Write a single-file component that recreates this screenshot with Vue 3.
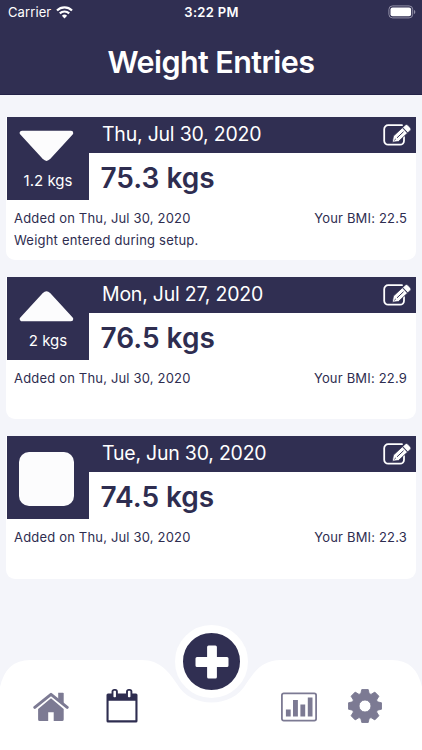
<script setup>
import { ref } from 'vue'

const entries = ref([
    {
        id: 1,
        date: 'Thu, Jul 30, 2020',
        weight: '75.3 kgs',
        trend: 'down',
        change: '1.2 kgs',
        added: 'Thu, Jul 30, 2020',
        bmi: '22.5',
        note: 'Weight entered during setup.'
    },
    {
        id: 2,
        date: 'Mon, Jul 27, 2020',
        weight: '76.5 kgs',
        trend: 'up',
        change: '2 kgs',
        added: 'Thu, Jul 30, 2020',
        bmi: '22.9',
        note: ''
    },
    {
        id: 3,
        date: 'Tue, Jun 30, 2020',
        weight: '74.5 kgs',
        trend: 'same',
        change: '',
        added: 'Thu, Jul 30, 2020',
        bmi: '22.3',
        note: ''
    }
])

const activeTab = ref('entries')
</script>

<template>
    <div class="screen">
        <header class="header">
            <div class="status">
                <div class="carrier">
                    <span>Carrier</span>
                    <svg class="wifi" viewBox="0 0 17 13">
                        <path d="M1 4.5a10.8 10.8 0 0 1 15 0" />
                        <path d="M3.8 7.4a6.8 6.8 0 0 1 9.4 0" />
                        <path class="dot" d="M8.5 12.4L5.9 9.8a3.8 3.8 0 0 1 5.2 0z" />
                    </svg>
                </div>
                <div class="time">3:22 PM</div>
                <svg class="battery" viewBox="0 0 28 14">
                    <rect class="shell" x="0.9" y="0.9" width="23.8" height="12" rx="3.6" />
                    <rect class="charge" x="2.5" y="2.5" width="20.6" height="8.8" rx="2" />
                    <path class="cap" d="M26 5v4c.8-.3 1.3-1.1 1.3-2S26.8 5.3 26 5z" />
                </svg>
            </div>
            <h1>Weight Entries</h1>
        </header>

        <main class="list">
            <article v-for="entry in entries" :key="entry.id" class="card">
                <div class="card-top">
                    <div class="trend">
                        <svg v-if="entry.trend === 'down'" class="arrow" viewBox="0 0 55 32">
                            <path d="M3 3H52L29.5 27.5Q27.5 29.5 25.5 27.5Z" />
                        </svg>
                        <svg v-else-if="entry.trend === 'up'" class="arrow" viewBox="0 0 55 32">
                            <path d="M3 29H52L29.5 4.5Q27.5 2.5 25.5 4.5Z" />
                        </svg>
                        <div v-else class="square"></div>
                        <span v-if="entry.change" class="change">{{ entry.change }}</span>
                    </div>
                    <div class="summary">
                        <div class="date-bar">
                            <span class="date">{{ entry.date }}</span>
                            <button class="edit" aria-label="Edit entry">
                                <svg viewBox="0 0 28 24">
                                    <path class="frame" d="M19 2.2H5.2A4 4 0 0 0 1.2 6.2V17.7A4 4 0 0 0 5.2 21.7H17A4 4 0 0 0 21 17.7V14" />
                                    <g transform="translate(9.3 19.2) rotate(-43)">
                                        <path class="pencil" d="M0 0L5-3.7H17.3V3.7H5Z" />
                                        <path class="pencil" d="M17.7-3.7H21.2Q23-3.7 23-1.9V1.9Q23 3.7 21.2 3.7H17.7Z" />
                                        <path class="cut" d="M6.8 0H15M3.2 0H4.4" />
                                    </g>
                                </svg>
                            </button>
                        </div>
                        <div class="weight">{{ entry.weight }}</div>
                    </div>
                </div>
                <div class="details">
                    <span>Added on {{ entry.added }}</span>
                    <span class="bmi">Your BMI: {{ entry.bmi }}</span>
                </div>
                <p v-if="entry.note" class="note">{{ entry.note }}</p>
            </article>
        </main>

        <nav class="nav">
            <svg class="nav-shape" viewBox="0 0 422 90">
                <path d="M0 27Q6 0 30 0H142C160 0 169 12 177 24C184 36 197 42.5 211.5 42.5C226 42.5 239 36 246 24C254 12 262 0 281 0H392Q416 0 422 27V90H0Z" />
            </svg>
            <button class="add" aria-label="Add entry">
                <svg viewBox="0 0 34 34">
                    <path d="M13.6 0.5h6.8q1.5 0 1.5 1.5v10.1h10.1q1.5 0 1.5 1.5v6.8q0 1.5-1.5 1.5h-10.1v10.1q0 1.5-1.5 1.5h-6.8q-1.5 0-1.5-1.5v-10.1h-10.1q-1.5 0-1.5-1.5v-6.8q0-1.5 1.5-1.5h10.1v-10.1q0-1.5 1.5-1.5z" />
                </svg>
            </button>
            <button class="tab home" :class="{ active: activeTab === 'home' }" aria-label="Home" @click="activeTab = 'home'">
                <svg viewBox="0 0 36 34">
                    <path d="M25.2 .8h4.7q.8 0 .8.8v11.4l-5.5-4.6z" />
                    <path class="roof" d="M1.8 15.3L18 2.4L34.2 15.3" />
                    <path d="M5.1 17L18 6.3L30.7 17V27.5q0 1.6-1.6 1.6h-8.4V20.2h-5.5v8.9H6.7q-1.6 0-1.6-1.6z" />
                </svg>
            </button>
            <button class="tab calendar" :class="{ active: activeTab === 'entries' }" aria-label="Entries" @click="activeTab = 'entries'">
                <svg viewBox="0 0 32 35">
                    <path fill-rule="evenodd" d="M2 5.4h28q1.5 0 1.5 1.5v26q0 1.5-1.5 1.5H2q-1.5 0-1.5-1.5v-26q0-1.5 1.5-1.5zM2.6 12.8v19.5h26.8V12.8z" />
                    <rect class="ring" x="6.5" y="1.9" width="4.4" height="8.2" rx="1.7" />
                    <rect class="ring" x="21" y="1.9" width="4.4" height="8.2" rx="1.7" />
                </svg>
            </button>
            <button class="tab chart" :class="{ active: activeTab === 'chart' }" aria-label="Chart" @click="activeTab = 'chart'">
                <svg viewBox="0 0 36 30">
                    <rect class="outline" x="0.9" y="1.4" width="34.2" height="27.2" rx="1.8" />
                    <path d="M4.9 17.4h4.8v7H4.9zM12 8h4.9v16.4H12zM19.4 12.6h4.8v11.8h-4.8zM26.8 5.6h4.7v18.8h-4.7z" />
                </svg>
            </button>
            <button class="tab settings" :class="{ active: activeTab === 'settings' }" aria-label="Settings" @click="activeTab = 'settings'">
                <svg viewBox="-17 -17 34 34">
                    <path fill-rule="evenodd" d="M-3.2-16.5H3.2L4.2-12.4L6-11.6L9.8-13.9L13.9-9.8L11.6-6L12.4-4.2L16.5-3.2V3.2L12.4 4.2L11.6 6L13.9 9.8L9.8 13.9L6 11.6L4.2 12.4L3.2 16.5H-3.2L-4.2 12.4L-6 11.6L-9.8 13.9L-13.9 9.8L-11.6 6L-12.4 4.2L-16.5 3.2V-3.2L-12.4-4.2L-11.6-6L-13.9-9.8L-9.8-13.9L-6-11.6L-4.2-12.4ZM0-6A6 6 0 1 0 0 6A6 6 0 1 0 0-6Z" />
                </svg>
            </button>
        </nav>
    </div>
</template>

<style>
body {
    background: #f4f5fa;
}
</style>

<style scoped>
.screen {
    display: flex;
    flex-direction: column;
    width: 422px;
    height: 750px;
    overflow: hidden;
    background: #f4f5fa;
    color: #2e2d50;
    font-family: Inter, "Liberation Sans", sans-serif;
}

button {
    display: block;
    padding: 0;
    border: none;
    background: none;
    cursor: pointer;
}

svg {
    display: block;
}

.header {
    box-sizing: border-box;
    flex: none;
    height: 95px;
    background: #302f52;
    border-bottom: 1px solid #232247;
    color: #fff;
}

.status {
    display: grid;
    grid-template-columns: 1fr auto 1fr;
    align-items: center;
    height: 24px;
    padding: 0 7px 0 8px;
    font-size: 13px;
}

.carrier {
    display: flex;
    align-items: center;
    gap: 5px;
    letter-spacing: 0.1px;
}

.wifi {
    width: 17px;
    height: 13px;
    fill: none;
    stroke: #fff;
    stroke-width: 2.2;
}

.wifi .dot {
    fill: #fff;
    stroke: none;
}

.time {
    font-weight: 600;
    letter-spacing: 0.3px;
}

.battery {
    justify-self: end;
    width: 28px;
    height: 14px;
    margin-right: -1px;
}

.shell {
    fill: none;
    stroke: #918fa6;
    stroke-width: 1;
}

.charge {
    fill: #fff;
}

.cap {
    fill: #918fa6;
}

h1 {
    margin: 19px 0 0;
    font-size: 30.5px;
    font-weight: 600;
    line-height: 38px;
    letter-spacing: -0.58px;
    text-align: center;
}

.list {
    flex: 1;
    display: flex;
    flex-direction: column;
    gap: 17px;
    padding: 22px 6px 0;
}

.card {
    flex: none;
    height: 142.5px;
    border-radius: 0 0 9px 9px;
    background: #fff;
}

.card-top {
    display: flex;
    height: 83px;
    padding-left: 1px;
}

.trend {
    display: flex;
    flex-direction: column;
    align-items: flex-start;
    width: 82px;
    background: #302f52;
    color: #fff;
}

.arrow {
    width: 55px;
    height: 32px;
    margin: 13px 0 0 12px;
    fill: #fcfcfd;
    stroke: #fcfcfd;
    stroke-width: 4.5;
    stroke-linejoin: round;
}

.square {
    width: 55px;
    height: 54px;
    margin: 15.5px 0 0 12px;
    border-radius: 10px;
    background: #fcfcfd;
}

.change {
    align-self: center;
    margin-top: 9px;
    font-size: 15px;
    line-height: 19px;
}

.summary {
    flex: 1;
}

.date-bar {
    display: flex;
    justify-content: space-between;
    height: 36px;
    padding: 0 5px 0 13px;
    background: #302f52;
    color: #fff;
}

.date {
    font-size: 19.5px;
    line-height: 34px;
    letter-spacing: -0.22px;
}

.edit {
    align-self: flex-start;
    margin-top: 6px;
}

.edit svg {
    width: 28px;
    height: 24px;
}

.frame {
    fill: none;
    stroke: #fff;
    stroke-width: 1.8;
    stroke-linecap: round;
}

.pencil {
    fill: #fff;
    stroke: #302f52;
    stroke-width: 0.7;
}

.cut {
    fill: none;
    stroke: #302f52;
    stroke-width: 0.9;
    stroke-linecap: round;
}

.weight {
    padding-left: 11.5px;
    font-size: 28px;
    font-weight: 600;
    line-height: 50px;
}

.details {
    display: flex;
    justify-content: space-between;
    padding: 8px 9px 0 8px;
    font-size: 13px;
    line-height: 20px;
    letter-spacing: 0.18px;
}

.note {
    margin: 2px 8px 0;
    font-size: 13px;
    line-height: 20px;
    letter-spacing: 0.21px;
}

.nav {
    position: relative;
    flex: none;
    display: flex;
    align-items: flex-start;
    height: 90px;
    padding-left: 33px;
}

.nav-shape {
    position: absolute;
    inset: 0;
    width: 422px;
    height: 90px;
    fill: #fff;
}

.add {
    position: absolute;
    top: -35px;
    left: 175px;
    display: flex;
    align-items: center;
    justify-content: center;
    width: 73px;
    height: 73px;
    border: 8px solid #fff;
    border-radius: 50%;
    background: #302f52;
}

.add svg {
    flex: none;
    width: 34px;
    height: 34px;
    fill: #fff;
}

.tab {
    position: relative;
    flex: none;
    color: #7c7a93;
}

.tab svg {
    fill: currentColor;
}

.tab.active {
    color: #2e2d50;
}

.home {
    margin-top: 32px;
}

.home svg {
    width: 36px;
    height: 34px;
}

.home .roof {
    fill: none;
    stroke: currentColor;
    stroke-width: 3;
    stroke-linecap: round;
    stroke-linejoin: round;
}

.calendar {
    margin: 28px 0 0 37px;
}

.calendar svg {
    width: 32px;
    height: 35px;
}

.ring {
    fill: #fff;
    stroke: currentColor;
    stroke-width: 1.9;
}

.chart {
    margin: 32px 0 0 143px;
}

.chart svg {
    width: 36px;
    height: 30px;
}

.outline {
    fill: none;
    stroke: currentColor;
    stroke-width: 1.8;
}

.settings {
    margin: 29px 0 0 31px;
}

.settings svg {
    width: 34px;
    height: 34px;
    stroke: currentColor;
    stroke-width: 0.9;
    stroke-linejoin: round;
}
</style>
